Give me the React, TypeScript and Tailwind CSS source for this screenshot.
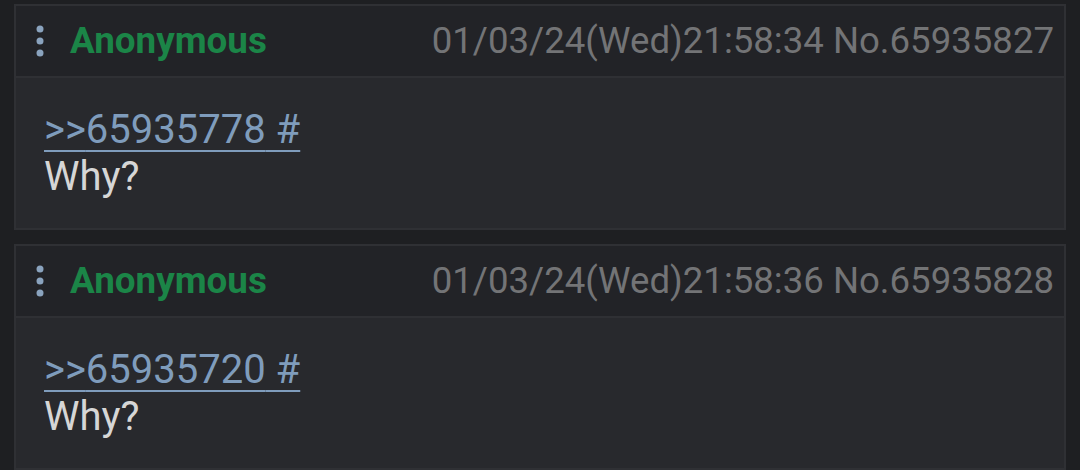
const posts = [
  { id: "65935827", time: "01/03/24(Wed)21:58:34", quote: "65935778" },
  { id: "65935828", time: "01/03/24(Wed)21:58:36", quote: "65935720" },
];

function Dots() {
  return (
    <svg width="12" height="34" viewBox="0 0 12 34" className="shrink-0">
      <circle cx="6" cy="5" r="3.5" fill="#8aa3be" />
      <circle cx="6" cy="17" r="3.5" fill="#8aa3be" />
      <circle cx="6" cy="29" r="3.5" fill="#8aa3be" />
    </svg>
  );
}

function Post({ id, time, quote }: { id: string; time: string; quote: string }) {
  return (
    <div className="shrink-0 border-2 border-[#2f3034]">
      <div className="flex h-[72px] items-center border-b-2 border-[#2f3034] bg-[#222327] pl-[18px] pr-[10px]">
        <Dots />
        <span className="ml-[24px] text-[36.8px] font-bold text-[#1b8547]">Anonymous</span>
        <span className="ml-auto text-[36.6px] text-[#737476]">
          {time} No.{id}
        </span>
      </div>
      <div className="bg-[#28292d] px-[28px] py-[28px] text-[40px] leading-[47px]">
        <a className="text-[#7f9cbc] underline decoration-2 underline-offset-[7px]">
          &gt;&gt;{quote} #
        </a>
        <div className="text-[#d6d6d6]">Why?</div>
      </div>
    </div>
  );
}

export default function App() {
  return (
    <div
      className="flex h-[470px] flex-col gap-[14px] overflow-hidden bg-[#1e1f22] px-[14px] pt-[4px]"
      style={{ fontFamily: "Roboto, 'Liberation Sans', sans-serif" }}
    >
      {posts.map((p) => (
        <Post key={p.id} {...p} />
      ))}
    </div>
  );
}
